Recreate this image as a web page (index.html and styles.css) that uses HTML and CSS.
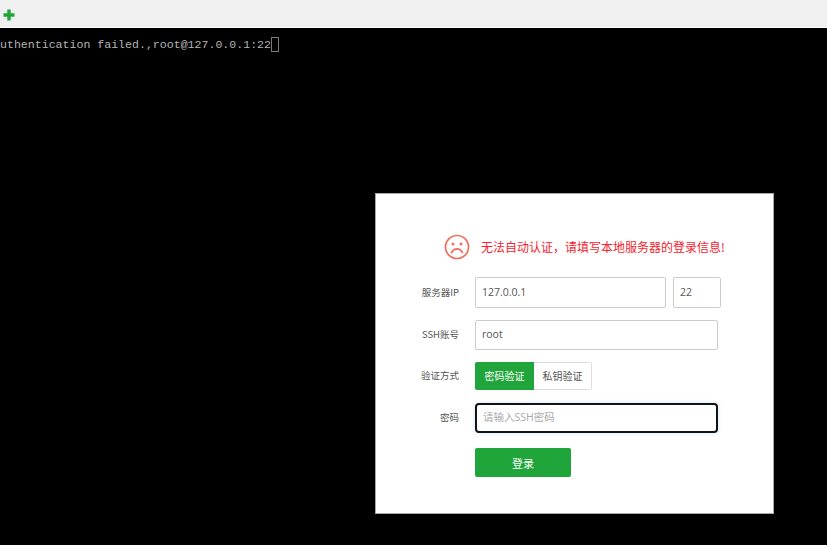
FILE: index.html
```html
<!DOCTYPE html>
<html lang="zh-CN">
<head>
<meta charset="utf-8">
<title>SSH</title>
<link rel="stylesheet" href="styles.css">
</head>
<body>
<div class="toolbar">
  <svg class="plus" width="12" height="12" viewBox="0 0 12 12"><path d="M4.300 .5h3.400v3.800h3.800v3.400h-3.800v3.800h-3.400v-3.800h-3.800v-3.400h3.800z" fill="#20a53a"/></svg>
</div>
<main class="terminal">
  <div class="term-line"><span>uthentication failed.,root@127.0.0.1:22</span><i class="cursor"></i></div>
  <form class="dialog">
    <div class="notice">
      <svg class="sad" width="26" height="26" viewBox="0 0 26 26" fill="none" stroke="#ef6f5f">
        <circle cx="13" cy="13" r="11.500" stroke-width="1.700"/>
        <path d="M7.500 18.500c1.500-2.600 3.400-3.600 5.500-3.600s4 1 5.500 3.600" stroke-width="1.700" stroke-linecap="round"/>
        <circle cx="9" cy="10" r="1.500" fill="#ef6f5f" stroke="none"/>
        <circle cx="17" cy="10" r="1.500" fill="#ef6f5f" stroke="none"/>
      </svg>
      <span class="notice-text">无法自动认证，请填写本地服务器的登录信息!</span>
    </div>
    <div class="row row-ip">
      <label class="label">服务器IP</label>
      <input class="input ip" value="127.0.0.1">
      <input class="input port" value="22">
    </div>
    <div class="row row-user">
      <label class="label">SSH账号</label>
      <input class="input wide" value="root">
    </div>
    <div class="row row-auth">
      <label class="label">验证方式</label>
      <div class="switch">
        <span class="opt on">密码验证</span>
        <span class="opt">私钥验证</span>
      </div>
    </div>
    <div class="row row-pass">
      <label class="label">密码</label>
      <input class="input wide focus" placeholder="请输入SSH密码">
    </div>
    <div class="row row-btn">
      <span class="label"></span>
      <button class="submit" type="button">登录</button>
    </div>
  </form>
</main>
</body>
</html>
```
FILE: styles.css
```css
* { box-sizing: border-box; }
html, body { height: 100%; }
body {
  margin: 0;
  display: flex;
  flex-direction: column;
  overflow: hidden;
  background: #000;
  font-family: "Noto Sans CJK SC", "Noto Sans", sans-serif;
}
.toolbar {
  height: 28px;
  flex: none;
  background: #f0f0f0;
  border-bottom: 1px solid #fff;
  padding: 9px 0 0 3px;
}
.plus { display: block; }
.terminal {
  position: relative;
  flex: 1;
  background: #000;
  padding: 8px 0 0;
}
.term-line {
  display: flex;
  align-items: center;
  height: 15px;
  margin-top: 1px;
  color: #b4b4b4;
  font: 11.580px/17px "Liberation Mono", monospace;
  white-space: pre;
}
.cursor {
  width: 8px;
  height: 15px;
  border: 1px solid #7a7a7a;
}
.dialog {
  position: absolute;
  left: 375px;
  top: 165px;
  width: 399px;
  height: 321px;
  background: #fff;
  border: 1px solid #a8a8a8;
  padding-top: 39px;
}
.notice {
  display: flex;
  align-items: center;
  height: 28px;
  padding-left: 68px;
  gap: 11px;
  color: #f5222d;
  font-size: 12px;
  white-space: nowrap;
}
.notice-text { padding-bottom: 2px; }
.sad { flex: none; }
.row { display: flex; align-items: center; }
.label {
  width: 83px;
  flex: none;
  margin-right: 16px;
  padding-bottom: 2px;
  text-align: right;
  font-size: 9.500px;
  color: #555;
}
.input {
  height: 30px;
  border: 1px solid #ccc;
  border-radius: 2px;
  padding: 0 6px 2px;
  font: 10.500px "Open Sans", "Noto Sans CJK SC", sans-serif;
  color: #555;
  background: #fff;
  outline: none;
}
.input::placeholder { color: #aaa; }
.row-ip { margin-top: 16px; }
.ip { width: 191px; height: 31px; }
.port { width: 48px; height: 31px; margin-left: 7px; }
.row-user { margin-top: 12px; }
.wide { width: 243px; }
.row-auth { margin-top: 12px; }
.switch {
  display: flex;
  height: 28px;
  border: 1px solid #ddd;
  border-radius: 2px;
}
.opt {
  width: 57px;
  font-size: 10px;
  line-height: 25px;
  text-align: center;
  color: #555;
}
.opt.on {
  margin: -1px 0 -1px -1px;
  width: 59px;
  line-height: 27px;
  background: #20a53a;
  color: #fff;
  border-radius: 2px 0 0 2px;
}
.row-pass { margin-top: 13px; }
.focus {
  border: 2px solid #101418;
  border-radius: 4px;
  box-shadow: 0 0 4px rgba(120, 180, 240, .35);
}
.row-btn { margin-top: 15px; }
.submit {
  width: 96px;
  height: 29px;
  border: 0;
  border-radius: 2px;
  background: #20a53a;
  color: #fff;
  font: 11px "Noto Sans CJK SC", sans-serif;
}
```
